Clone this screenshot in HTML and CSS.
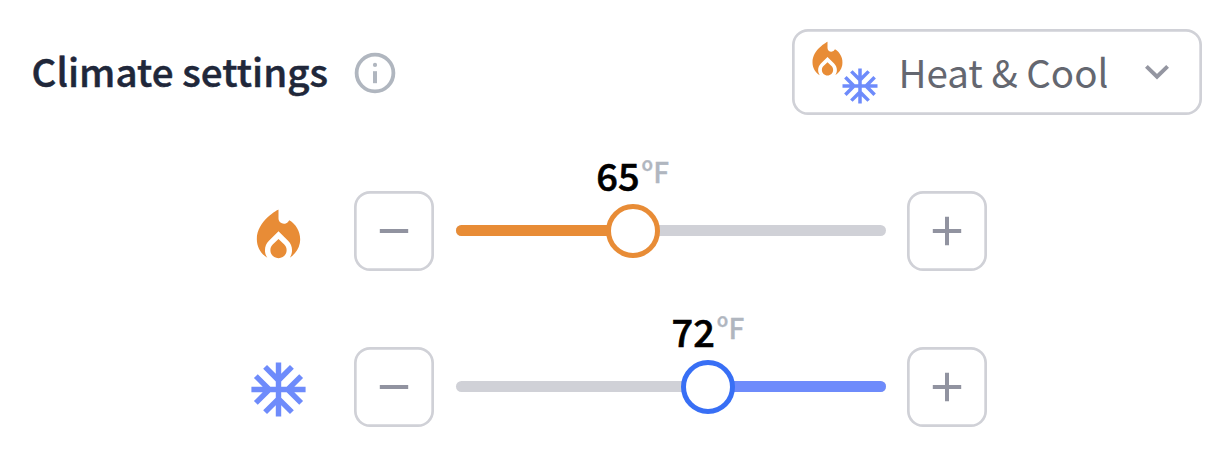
FILE: index.html
```html
<!DOCTYPE html>
<html lang="en">
<head>
<meta charset="utf-8">
<title>Climate settings</title>
<link rel="stylesheet" href="styles.css">
</head>
<body>
<svg class="defs" aria-hidden="true">
  <symbol id="flame" viewBox="0 0 24 24"><path d="M12 12.9l-2.13 2.09C9.31 15.55 9 16.28 9 17.06 9 18.68 10.35 20 12 20s3-1.32 3-2.94c0-.78-.31-1.52-.87-2.07L12 12.9zM16 6l-.44.55C14.38 8.02 12 7.19 12 5.3V2S4 6 4 13c0 2.92 1.56 5.47 3.89 6.86-.56-.79-.89-1.76-.89-2.8 0-1.32.52-2.56 1.47-3.5L12 10.1l3.53 3.47c.95.93 1.47 2.17 1.47 3.5 0 1.02-.31 1.96-.85 2.75 1.89-1.15 3.29-3.06 3.71-5.3.66-3.55-1.07-6.9-3.86-8.52z"/></symbol>
  <symbol id="snow" viewBox="0 0 24 24"><path d="M22 11h-4.17l3.24-3.24-1.41-1.42L15 11h-2V9l4.66-4.66-1.42-1.41L13 6.17V2h-2v4.17L7.76 2.93 6.34 4.34 11 9v2H9L4.34 6.34 2.93 7.76 6.17 11H2v2h4.17l-3.24 3.24 1.41 1.42L9 13h2v2l-4.66 4.66 1.42 1.41L11 17.83V22h2v-4.17l3.24 3.24 1.42-1.41L13 15v-2h2l4.66 4.66 1.41-1.42L17.83 13H22z"/></symbol>
  <symbol id="minus" viewBox="0 0 30 30"><path d="M.8 13h28.4v4H.8z"/></symbol>
  <symbol id="plus" viewBox="0 0 30 30"><path d="M.8 13H13V.8h4V13h12.2v4H17v12.2h-4V17H.8z"/></symbol>
</svg>
<main class="card">
  <header class="header">
    <h1 class="title">Climate settings</h1>
    <svg class="info" viewBox="0 0 42 42"><circle cx="21" cy="21" r="18.4"/><circle class="info-fill" cx="21" cy="12.9" r="2.1"/><path class="info-fill" d="M19 19.2h4v12h-4z"/></svg>
    <button class="select">
      <span class="modes"><svg class="mode-flame"><use href="#flame"/></svg><svg class="mode-snow"><use href="#snow"/></svg></span>
      <span class="select-label">Heat &amp; Cool</span>
      <svg class="chevron" viewBox="0 0 26 18"><path d="M2.4 3.4L13 13.6 23.6 3.4"/></svg>
    </button>
  </header>
  <section class="row heat">
    <svg class="row-icon"><use href="#flame"/></svg>
    <button class="step" aria-label="Decrease heat"><svg><use href="#minus"/></svg></button>
    <div class="slider">
      <div class="track"><div class="fill" style="width:41.2%"></div></div>
      <div class="thumb" style="left:41.2%"></div>
      <div class="value" style="left:41.2%">65<span class="unit">ºF</span></div>
    </div>
    <button class="step" aria-label="Increase heat"><svg><use href="#plus"/></svg></button>
  </section>
  <section class="row cool">
    <svg class="row-icon"><use href="#snow"/></svg>
    <button class="step" aria-label="Decrease cool"><svg><use href="#minus"/></svg></button>
    <div class="slider">
      <div class="track"><div class="fill" style="width:41.3%"></div></div>
      <div class="thumb" style="left:58.7%"></div>
      <div class="value" style="left:58.7%">72<span class="unit">ºF</span></div>
    </div>
    <button class="step" aria-label="Increase cool"><svg><use href="#plus"/></svg></button>
  </section>
</main>
</body>
</html>
```
FILE: styles.css
```css
* { box-sizing: border-box; }
body { margin: 0; background: #fff; font-family: "Noto Sans CJK SC", "Open Sans", sans-serif; }
button { border: 0; padding: 0; background: none; font: inherit; }
svg { display: block; flex: none; }
.defs { position: absolute; width: 0; height: 0; }
.card { width: 1232px; height: 476px; overflow: hidden; }
.header { display: flex; align-items: center; height: 86px; margin: 29px 30px 0 31.5px; }
.title { margin: 0 0 4px; font-size: 38.5px; font-weight: 500; line-height: 54px; letter-spacing: .06px; color: #20273a; white-space: nowrap; -webkit-text-stroke: .5px #20273a; }
.info { width: 42px; height: 42px; margin-left: 25.5px; margin-top: 1px; fill: none; stroke: #b0b6bf; stroke-width: 3.8; }
.info-fill { fill: #b0b6bf; stroke: none; }
.select { display: flex; align-items: center; width: 410.5px; height: 86px; margin-left: auto; padding-left: 13px; border-radius: 16px; box-shadow: inset 0 0 0 2.7px #d0d1d7; }
.modes { display: flex; width: 78px; height: 86px; flex: none; }
.mode-flame { width: 45px; height: 45px; margin-top: 9px; fill: #e88c36; }
.mode-snow { width: 42px; height: 42px; margin: 36px 0 0 -11px; fill: #6e8bfb; }
.select-label { margin: 0 0 2px 16px; font-size: 38.5px; line-height: 54px; color: #646770; white-space: nowrap; }
.chevron { width: 26px; height: 18px; margin-left: auto; margin-right: 32.5px; fill: none; stroke: #9496a1; stroke-width: 4; }
.row { display: flex; align-items: center; width: 742px; height: 80px; margin-left: 246px; }
.heat { margin-top: 76px; color: #e88c36; }
.cool { margin-top: 76px; color: #6e8bfb; }
.row-icon { width: 65px; height: 65px; margin: 11px 43px 0 0; fill: currentColor; }
.cool .row-icon { margin-top: 4px; }
.step { display: flex; align-items: center; justify-content: center; flex: none; width: 80px; height: 80px; border-radius: 16px; box-shadow: inset 0 0 0 2.7px #d0d1d7; }
.step svg { width: 30px; height: 30px; fill: #9193a0; }
.slider { position: relative; display: flex; align-items: center; width: 430px; height: 80px; margin: 0 21.5px; flex: none; }
.track { display: flex; width: 100%; height: 11px; margin-bottom: 1px; border-radius: 6px; background: #d0d1d7; overflow: hidden; }
.fill { background: currentColor; }
.cool .fill { margin-left: auto; }
.thumb { position: absolute; top: 13px; width: 54px; height: 54px; margin-left: -27px; border: 5px solid #e88c36; border-radius: 50%; background: #fff; }
.cool .thumb { border-color: #386ff5; }
.value { position: absolute; top: -43px; display: flex; transform: translateX(-50%); font-size: 38px; font-weight: 500; line-height: 54px; color: #000; -webkit-text-stroke: .6px #000; }
.unit { margin-left: 2px; font-size: 28px; line-height: 47px; color: #b0b6bf; -webkit-text-stroke: .3px #b0b6bf; }
```
